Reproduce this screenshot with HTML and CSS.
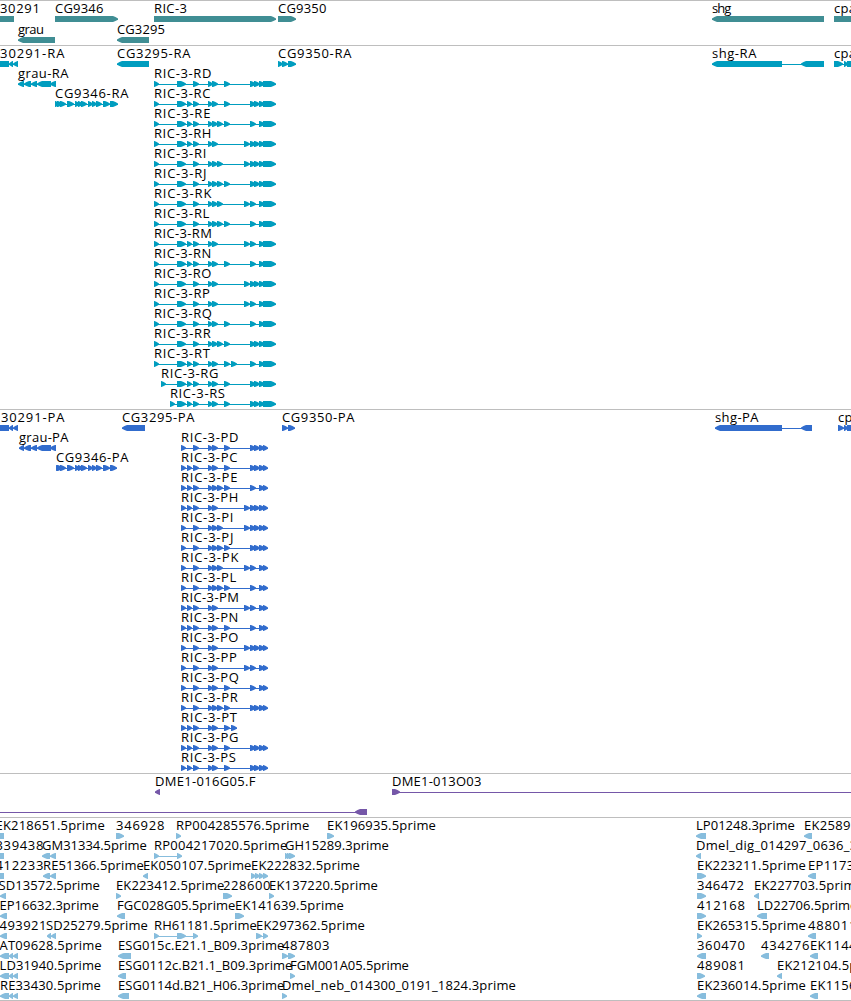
FILE: index.html
```html
<!DOCTYPE html>
<html lang="en">
<head>
    <meta charset="UTF-8">
    <meta name="viewport" content="width=device-width, initial-scale=1.0">
    <title>Genome Browser</title>
    <link rel="stylesheet" href="styles.css">
</head>
<body>
    <div class="browser">
        <section class="track genes"><svg id="genes"></svg></section>
        <section class="track transcripts"><svg id="transcripts"></svg></section>
        <section class="track proteins"><svg id="proteins"></svg></section>
        <section class="track clones"><svg id="clones"></svg></section>
        <section class="track ests"><svg id="ests"></svg></section>
    </div>
    <script src="tracks.js"></script>
</body>
</html>
```
FILE: styles.css
```css
body {
    margin: 0;
    background-color: #ffffff;
    font-family: "Open Sans", "Noto Sans", sans-serif;
    overflow: hidden;
}

.browser {
    display: flex;
    flex-direction: column;
    width: 851px;
    border-bottom: 1px solid #bebebe;
}

.track {
    box-sizing: border-box;
    border-top: 1px solid #bebebe;
}

.track svg {
    display: block;
    width: 100%;
    height: 100%;
    overflow: visible;
}

.genes {
    height: 45px;
    color: #408e94;
}

.transcripts {
    height: 364px;
    color: #009dbf;
}

.proteins {
    height: 364px;
    color: #316ccd;
}

.clones {
    height: 44px;
    color: #7557a8;
}

.ests {
    height: 183px;
    color: #87bddd;
}

.label {
    fill: #000000;
    font-size: 13px;
    letter-spacing: 0.3px;
}

.exon {
    fill: currentColor;
}

.intron {
    fill: currentColor;
    shape-rendering: crispEdges;
}
```
FILE: tracks.js
```js
const SVG_NS = "http://www.w3.org/2000/svg";

function add(svg, tag, attrs) {
    const el = document.createElementNS(SVG_NS, tag);
    for (const name in attrs) {
        el.setAttribute(name, attrs[name]);
    }
    svg.appendChild(el);
    return el;
}

// Feature: [row, label, label start, label end, direction, exons]
function drawTrack(id, rowHeight, features) {
    const svg = document.getElementById(id);
    features.forEach(([row, label, start, end, dir, exons]) => {
        const y = row * rowHeight + 15;
        const from = exons[0][0];
        const to = exons[exons.length - 1][1];
        add(svg, "rect", { class: "intron", x: from, y: y + 3, width: to - from, height: 1 });

        exons.forEach(([a, b]) => {
            const tip = Math.min(5, b - a - 0.5);
            const body = dir === ">" ? b - tip : a + tip;
            const flat = dir === ">" ? a : b;
            const point = dir === ">" ? b : a;
            const mid = (body + point) / 2;
            add(svg, "polygon", {
                class: "exon",
                points: `${flat},${y} ${body},${y} ${mid},${y + 1} ${point},${y + 2.4} ${point},${y + 3.8} ${mid},${y + 5} ${body},${y + 6} ${flat},${y + 6}`
            });
        });

        if (label) {
            const text = add(svg, "text", { class: "label", x: start - 0.5, y: y - 3 });
            text.textContent = label;
            if (end) {
                text.setAttribute("textLength", end - start + 1.2);
            }
        }
    });
}

drawTrack("genes", 21, [
    [0, "30291", 0.5, 39.5, "<", [[-20, 14]]],
    [0, "CG9346", 55.5, 103, ">", [[55, 118]]],
    [0, "RIC-3", 154.5, 186.5, ">", [[154, 276]]],
    [0, "CG9350", 278.5, 326, ">", [[278, 296]]],
    [0, "shg", 712.5, 731, "<", [[712, 824]]],
    [0, "cpa", 834.5, 0, ">", [[834, 870]]],
    [1, "grau", 18.5, 43.5, "<", [[18, 55]]],
    [1, "CG3295", 117.5, 164.5, "<", [[117, 149]]]
]);

// Exons shared by the RIC-3 isoforms
const ric3 = {
    a: [154, 159], b: [177, 186], c: [187, 192], d: [193, 199],
    e: [208, 213], f: [212, 218], h: [217, 223], g: [224, 230],
    i: [231, 237], j: [244, 250], k: [250, 256], l: [254, 260],
    m: [259, 265], n: [263, 276]
};
const isoforms = [
    ["D", "bdefgklmn"],
    ["C", "bcdefgklmn"],
    ["E", "bcdefhgkmn"],
    ["H", "bcdefjklmn"],
    ["I", "bdefhjklmn"],
    ["J", "bdefhgklmn"],
    ["K", "bdefhjkmn"],
    ["L", "bdefhgkmn"],
    ["M", "bcdefjkmn"],
    ["N", "bcdefgkmn"],
    ["O", "bdefjklmn"],
    ["P", "bdefjkmn"],
    ["Q", "bdefgkmn"],
    ["R", "bdefhgklmn"],
    ["T", "bcdefgikmn"],
    ["G", "bcdefgklmn"],
    ["S", "bcdefgklmn"]
];
const nameWidth = { D: 57, C: 56, E: 56, H: 57, I: 52, J: 52, K: 57, L: 55, M: 57.5, N: 57, O: 57, P: 55.5, Q: 57.5, R: 56.5, T: 55.5, G: 57, S: 54.5 };

const transcripts = isoforms.map(([name, exons], i) => {
    const start = name === "G" ? 161 : name === "S" ? 170 : 154;
    return [i + 1, "RIC-3-R" + name, start + 0.5, start + nameWidth[name], ">",
        [[start, start + 5]].concat([...exons].map(key => ric3[key]))];
});

const proteins = isoforms.map(([name, exons], i) => {
    const keys = name === "T" ? "bcdefgi" : exons;
    const coding = [...keys].map(key => key === "b" ? [181, 186] : key === "n" ? [263, 268] : ric3[key]);
    return [i + 1, "RIC-3-P" + name, 181.5, 181 + nameWidth[name], ">", coding];
});

const cg9346 = [[60, 66], [67, 74], [75, 80], [78, 83], [81, 87], [88, 93], [92, 97], [96, 102], [103, 110]];

drawTrack("transcripts", 20, [
    [0, "30291-RA", 0.5, 64, "<", [[-20, 9], [9, 13], [13, 18]]],
    [0, "CG3295-RA", 117.5, 190, "<", [[117, 149]]],
    [0, "CG9350-RA", 278.5, 351, ">", [[278, 283], [282, 288], [288, 296]]],
    [0, "shg-RA", 712.5, 756, "<", [[712, 782], [801, 824]]],
    [0, "cpa", 834.5, 0, ">", [[834, 843], [844, 848], [847, 870]]],
    [1, "grau-RA", 18.5, 68, "<", [[18, 24], [24, 31], [31, 37], [37, 51], [50, 56]]],
    [2, "CG9346-RA", 55.5, 128, ">", [[55, 60], [57, 63], ...cg9346, [110, 118]]],
    ...transcripts
]);

drawTrack("proteins", 20, [
    [0, "30291-PA", 1.5, 64, "<", [[-20, 9], [9, 13], [13, 18]]],
    [0, "CG3295-PA", 122.5, 194, "<", [[122, 145]]],
    [0, "CG9350-PA", 282.5, 354, ">", [[282, 288], [288, 295]]],
    [0, "shg-PA", 715.5, 758, "<", [[715, 782], [801, 812]]],
    [0, "cpa-PA", 838.5, 0, ">", [[838, 844], [844, 848], [847, 870]]],
    [1, "grau-PA", 19.5, 68, "<", [[19, 24], [24, 31], [31, 37], [37, 51], [50, 56]]],
    [2, "CG9346-PA", 56.5, 128, ">", [[56, 60], [57, 63], ...cg9346, [110, 117]]],
    ...proteins
]);

drawTrack("clones", 20, [
    [0, "DME1-016G05.F", 155.5, 255, "<", [[155, 160]]],
    [0, "DME1-013O03", 392.5, 481, ">", [[392, 400], [880, 890]]],
    [1, "", 0, 0, "<", [[-20, -10], [355, 367]]]
]);

drawTrack("ests", 20, [
    [0, "EK218651.5prime", -4, 104.5, "<", [[-8, 4]]],
    [0, "346928", 116.5, 164, ">", [[116, 124]]],
    [0, "RP004285576.5prime", 176.5, 309, ">", [[176, 181]]],
    [0, "EK196935.5prime", 327.5, 435.5, ">", [[327, 334]]],
    [0, "LP01248.3prime", 696.5, 794.5, "<", [[696, 706]]],
    [0, "EK258959.5prime", 804.5, 0, "<", [[804, 812]]],

    [1, "339438", -4, 43, "<", [[-8, 4]]],
    [1, "GM31334.5prime", 42.5, 146.5, "<", [[42, 50], [50, 56]]],
    [1, "RP004217020.5prime", 154.5, 287, ">", [[154, 159], [177, 182]]],
    [1, "GH15289.3prime", 285.5, 388.5, ">", [[285, 289], [287, 292], [289, 295]]],
    [1, "Dmel_dig_014297_0636_3prime", 696.5, 0, "<", [[696, 701]]],

    [2, "412233", -4, 43, "<", [[-8, 4]]],
    [2, "RE51366.5prime", 43.5, 143.5, "<", [[43, 50], [50, 56]]],
    [2, "EK050107.5prime", 143.5, 251, "<", [[143, 148]]],
    [2, "EK222832.5prime", 251.5, 359.5, ">", [[251, 256], [255, 260], [259, 264], [263, 268]]],
    [2, "EK223211.5prime", 697.5, 805.5, ">", [[697, 706]]],
    [2, "EP1173.5prime", 808.5, 0, "<", [[808, 816]]],

    [3, "SD13572.5prime", -1, 99.5, "<", [[0, 6]]],
    [3, "EK223412.5prime", 116.5, 224, ">", [[116, 121]]],
    [3, "228600", 223.5, 270, ">", [[223, 232]]],
    [3, "EK137220.5prime", 269.5, 377.5, ">", [[269, 274]]],
    [3, "346472", 697.5, 743.5, ">", [[697, 706]]],
    [3, "EK227703.5prime", 754.5, 862.5, "<", [[754, 759]]],

    [4, "EP16632.3prime", 0, 98.5, "<", [[0, 7]]],
    [4, "FGC028G05.5prime", 117.5, 235, "<", [[117, 125]]],
    [4, "EK141639.5prime", 235.5, 343.5, ">", [[235, 244]]],
    [4, "412168", 697.5, 744.5, ">", [[697, 706]]],
    [4, "LD22706.5prime", 757.5, 857, "<", [[757, 767]]],

    [5, "493921", 0, 46, "<", [[0, 7]]],
    [5, "SD25279.5prime", 46.5, 147.5, "<", [[47, 51], [51, 56]]],
    [5, "RH61181.5prime", 154.5, 256.5, ">", [[154, 159], [177, 186], [193, 198]]],
    [5, "EK297362.5prime", 256.5, 364.5, ">", [[256, 262], [263, 268]]],
    [5, "EK265315.5prime", 697.5, 805.5, ">", [[697, 702]]],
    [5, "488011", 808.5, 856, "<", [[808, 816]]],

    [6, "AT09628.5prime", 0, 101.5, "<", [[0, 9], [9, 13], [13, 18]]],
    [6, "ESG015c.E21.1_B09.3prime", 118.5, 284, "<", [[118, 131]]],
    [6, "487803", 282.5, 329, ">", [[282, 288], [288, 295]]],
    [6, "360470", 697.5, 744.5, "<", [[697, 706]]],
    [6, "434276", 761.5, 809, "<", [[761, 769]]],
    [6, "EK114459.5prime", 810.5, 0, "<", [[810, 818]]],

    [7, "LD31940.5prime", 0, 101, "<", [[0, 9], [9, 13], [13, 18]]],
    [7, "ESG0112c.B21.1_B09.3prime", 118.5, 292, "<", [[118, 126]]],
    [7, "FGM001A05.5prime", 290.5, 408.5, ">", [[290, 295]]],
    [7, "489081", 697.5, 744.5, ">", [[697, 705]]],
    [7, "EK212104.5prime", 777.5, 885.5, "<", [[777, 782]]],

    [8, "RE33430.5prime", 0.5, 100.5, "<", [[0, 9], [9, 13], [13, 18]]],
    [8, "ESG0114d.B21_H06.3prime", 118.5, 284, "<", [[118, 129]]],
    [8, "Dmel_neb_014300_0191_1824.3prime", 282.5, 515.5, ">", [[282, 287]]],
    [8, "EK236014.5prime", 697.5, 805.5, "<", [[697, 706]]],
    [8, "EK115659.5prime", 810.5, 0, "<", [[810, 818]]]
]);
```
